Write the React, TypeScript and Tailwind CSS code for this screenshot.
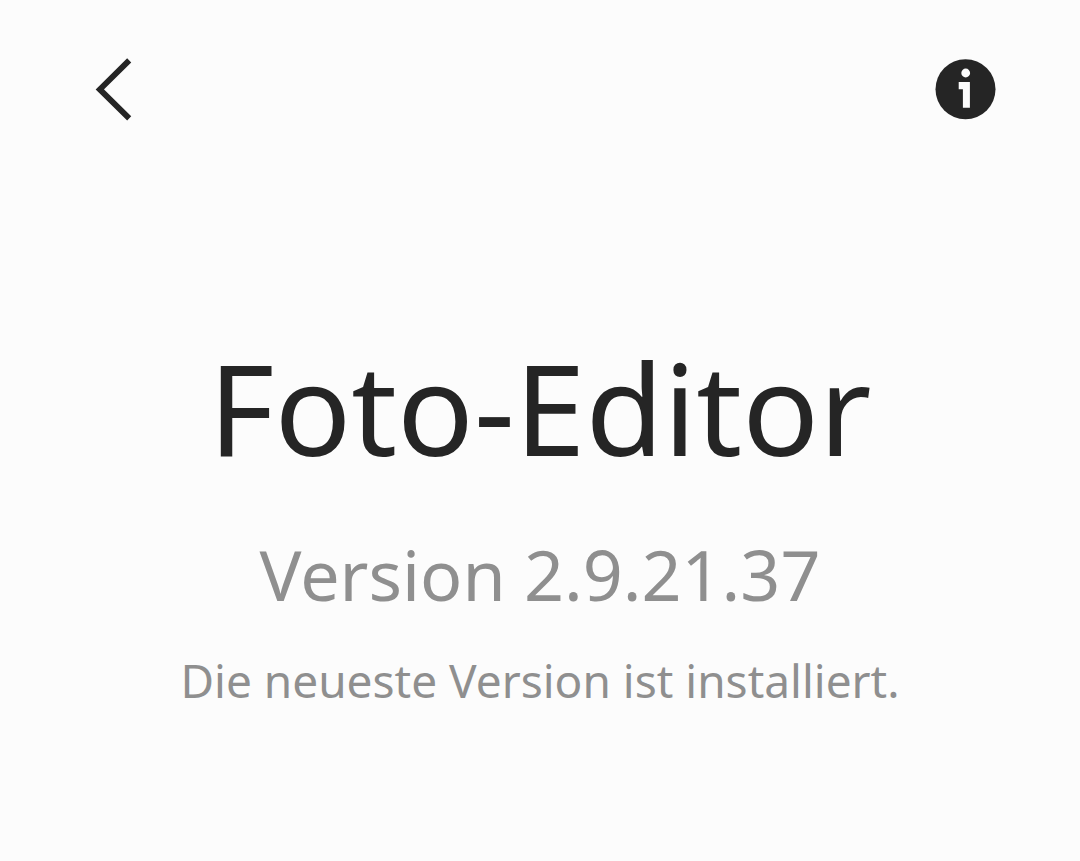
export default function App() {
  return (
    <div className="min-h-screen bg-[#fcfcfc] font-['Noto_Sans',sans-serif] text-[#252525]">
      <header className="flex items-center justify-between px-[84px] pt-[58px]">
        <button type="button" aria-label="Zurück" className="flex h-[64px] w-[60px] items-center justify-center">
          <svg width="60" height="64" viewBox="0 0 60 64" fill="none" stroke="currentColor" strokeWidth="5.800">
            <path d="M45.200 2.400 15.800 31.400 45.200 60.400" />
          </svg>
        </button>
        <button type="button" aria-label="App-Info" className="flex h-[64px] w-[60px] items-center justify-center">
          <svg width="60" height="64" viewBox="0 0 60 64" className="overflow-visible">
            <circle cx="29.500" cy="31.300" r="30" fill="currentColor" />
            <circle cx="29.700" cy="15" r="4.400" fill="#fcfcfc" />
            <path d="M22.700 24h11.200v25.700h-7v-18.500h-4.200z" fill="#fcfcfc" />
          </svg>
        </button>
      </header>

      <main className="flex flex-col items-center px-6 pt-[195px] pb-24 text-center">
        <h1 className="text-[127px] leading-[180px]">Foto-Editor</h1>
        <p className="mt-7 text-[70px] leading-[98px] text-[#8f8f8f]">Version 2.9.21.37</p>
        <p className="mt-6 text-[46px] leading-[66px] text-[#8f8f8f]">Die neueste Version ist installiert.</p>
      </main>
    </div>
  )
}
